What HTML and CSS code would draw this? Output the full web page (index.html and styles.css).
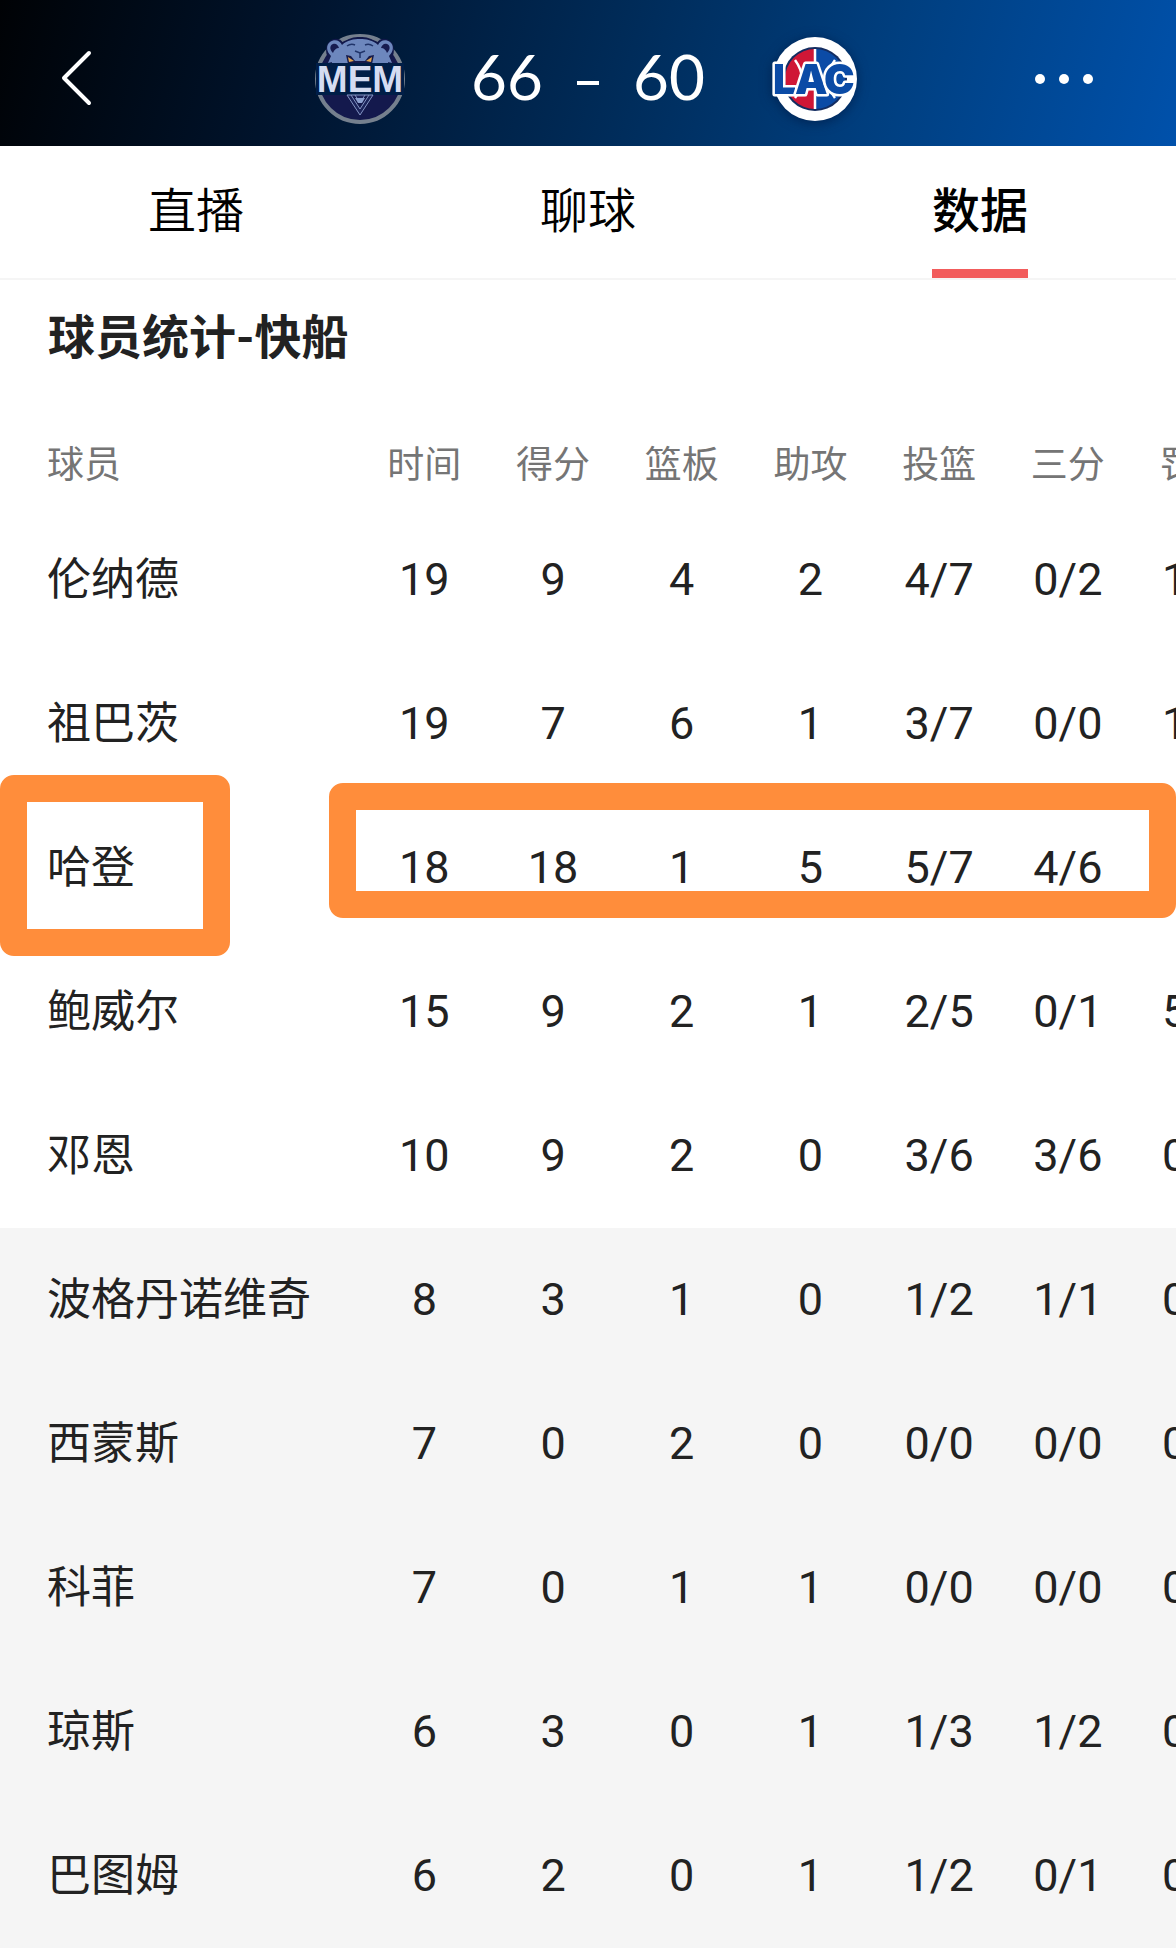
FILE: index.html
```html
<!DOCTYPE html>
<html lang="zh-CN">
<head>
	<meta charset="UTF-8">
	<meta name="viewport" content="width=device-width, initial-scale=1.0">
	<title>球员统计</title>
	<link rel="stylesheet" href="styles.css">
</head>
<body>
	<header class="header">
		<button class="icon-btn" aria-label="返回">
			<svg width="32" height="58" viewBox="0 0 32 58"><path d="M29 3L4 28l25 25" fill="none" stroke="#fff" stroke-width="4" stroke-linecap="round" stroke-linejoin="round"/></svg>
		</button>
		<div class="scoreboard">
			<svg class="logo" viewBox="0 0 90 90">
				<circle cx="45" cy="45" r="43" fill="#14194d" stroke="#75808e" stroke-width="4"/>
				<path d="M15 27C10 21 10 12 14 8c4-5 12-4 14 1C33 4 39 3 45 3s12 1 17 6c2-5 10-6 14-1 4 4 4 13-1 19l2 4-3-1 1 5H15l1-5-3 1z" fill="#11184a"/>
				<path d="M16 22c-5-5-5-11-1-14 4-3 10-2 12 3 5-5 12-6 18-6s13 1 18 6c2-5 8-6 12-3 4 3 4 9-1 14l3 7-4-1 1 5H16l1-5-4 1z" fill="#6d87bd"/>
				<path d="M18 19c-4-4-3-8 0-9 3-1 5 1 6 4-3 0-5 2-6 5zM72 19c4-4 3-8 0-9-3-1-5 1-6 4 3 0 5 2 6 5z" fill="#171c50"/>
				<path d="M32 12q4-3 8-1M50 11q4-2 8 1M40 17l5 2 5-2M45 19v5" fill="none" stroke="#203469" stroke-width="1.5"/>
				<path d="M31 21l5 1 4 5h10l4-5 5-1-2 9H33z" fill="#161b4b"/>
				<path d="M33 23l6 4-5 1zM57 23l-6 4 5 1z" fill="#e2a44d"/>
				<path d="M1 29h88v32H1z" fill="#001e47"/>
				<path d="M32 61h26L45 81zM36 61l9 14 9-14M40 61l5 8 5-8" fill="#1b235a" stroke="#8495c4" stroke-width="1"/>
				<path d="M40 64h10l-3 5h-4z" fill="#8ca0d0"/>
				<text x="45" y="58" class="mem-text">MEM</text>
			</svg>
			<div class="score">
				<span>66</span>
				<span class="dash"></span>
				<span>60</span>
			</div>
			<svg class="logo logo-lac" viewBox="0 0 90 90">
				<circle cx="44" cy="45" r="42" fill="#fff"/>
				<circle cx="44" cy="45" r="32" fill="#142d61"/>
				<path d="M44 15a30 30 0 0 0 0 60z" fill="#cf1736"/>
				<path d="M44 15a30 30 0 0 1 0 60z" fill="#0b4ba6"/>
				<path d="M44 15v60M24 26q14 19 0 38M64 26q-14 19 0 38" fill="none" stroke="#fff" stroke-width="2.5"/>
				<g class="lac-text">
					<text x="2" y="60">L</text>
					<text x="24" y="60">A</text>
					<text x="53" y="60">C</text>
				</g>
			</svg>
		</div>
		<button class="icon-btn" aria-label="更多">
			<svg width="60" height="20" viewBox="0 0 60 20"><g fill="#fff"><circle cx="6" cy="10" r="5"/><circle cx="30" cy="10" r="5"/><circle cx="54" cy="10" r="5"/></g></svg>
		</button>
	</header>
	<nav class="tabs">
		<a href="#live" class="tab">直播</a>
		<a href="#chat" class="tab">聊球</a>
		<a href="#stats" class="tab active">数据</a>
	</nav>
	<main id="stats">
		<h1 class="title">球员统计-快船</h1>
		<div class="table-wrap">
			<table class="stats">
				<thead>
					<tr><th class="name">球员</th><th>时间</th><th>得分</th><th>篮板</th><th>助攻</th><th>投篮</th><th>三分</th><th>罚球</th></tr>
				</thead>
				<tbody>
					<tr><td class="name">伦纳德</td><td>19</td><td>9</td><td>4</td><td>2</td><td>4/7</td><td>0/2</td><td>1/1</td></tr>
					<tr><td class="name">祖巴茨</td><td>19</td><td>7</td><td>6</td><td>1</td><td>3/7</td><td>0/0</td><td>1/2</td></tr>
					<tr class="marked"><td class="name">哈登<span class="mark mark-name"></span><span class="mark mark-data"></span></td><td>18</td><td>18</td><td>1</td><td>5</td><td>5/7</td><td>4/6</td><td>4/4</td></tr>
					<tr><td class="name">鲍威尔</td><td>15</td><td>9</td><td>2</td><td>1</td><td>2/5</td><td>0/1</td><td>5/5</td></tr>
					<tr><td class="name">邓恩</td><td>10</td><td>9</td><td>2</td><td>0</td><td>3/6</td><td>3/6</td><td>0/0</td></tr>
				</tbody>
				<tbody class="bench">
					<tr><td class="name">波格丹诺维奇</td><td>8</td><td>3</td><td>1</td><td>0</td><td>1/2</td><td>1/1</td><td>0/0</td></tr>
					<tr><td class="name">西蒙斯</td><td>7</td><td>0</td><td>2</td><td>0</td><td>0/0</td><td>0/0</td><td>0/0</td></tr>
					<tr><td class="name">科菲</td><td>7</td><td>0</td><td>1</td><td>1</td><td>0/0</td><td>0/0</td><td>0/0</td></tr>
					<tr><td class="name">琼斯</td><td>6</td><td>3</td><td>0</td><td>1</td><td>1/3</td><td>1/2</td><td>0/0</td></tr>
					<tr><td class="name">巴图姆</td><td>6</td><td>2</td><td>0</td><td>1</td><td>1/2</td><td>0/1</td><td>0/0</td></tr>
				</tbody>
			</table>
		</div>
	</main>
</body>
</html>
```

FILE: styles.css
```css
* {
	box-sizing: border-box;
}

body {
	margin: 0;
	background: #fff;
	color: #222;
	font-family: Roboto, "Noto Sans CJK SC", sans-serif;
}

.header {
	height: 146px;
	padding-top: 12px;
	display: grid;
	grid-template-columns: 1fr auto 1fr;
	align-items: center;
	background: linear-gradient(105deg, #000205 0%, #001530 27%, #002b58 52%, #003f80 75%, #0051ab 100%);
}

.icon-btn {
	display: flex;
	margin: 0 82px 0 60px;
	padding: 0;
	border: none;
	background: none;
	cursor: pointer;
	justify-self: start;
}

.icon-btn:last-child {
	justify-self: end;
}

.scoreboard {
	display: flex;
	align-items: center;
	gap: 66px;
}

.logo {
	width: 90px;
	height: 90px;
	overflow: visible;
}

.logo-lac {
	filter: drop-shadow(0 2px 6px rgba(0, 20, 60, 0.6));
}

.mem-text {
	font: bold 37px "Liberation Sans", sans-serif;
	text-anchor: middle;
	fill: #d5dcf1;
}

.lac-text {
	font: 900 41px Inter, sans-serif;
	fill: #0b4ba6;
	stroke: #fff;
	stroke-width: 5px;
	stroke-linejoin: round;
	paint-order: stroke;
}

.score {
	display: flex;
	align-items: center;
	gap: 34px;
	padding-bottom: 6px;
	color: #fff;
	font-family: Lato, sans-serif;
	font-size: 62px;
	line-height: 72px;
}

.dash {
	width: 22px;
	height: 4px;
	margin-top: 14px;
	background: #fff;
}

.tabs {
	display: grid;
	grid-template-columns: repeat(3, 1fr);
	justify-items: center;
	height: 134px;
	border-bottom: 2px solid #f5f5f5;
}

.tab {
	height: 132px;
	padding-top: 30px;
	color: #000;
	font-size: 48px;
	font-weight: 350;
	line-height: 72px;
	text-decoration: none;
}

.tab.active {
	font-weight: 500;
	border-bottom: 9px solid #f25c5c;
}

.title {
	margin: 0;
	padding: 22px 48px 0;
	font-size: 47px;
	line-height: 72px;
}

.table-wrap {
	overflow: hidden;
}

.stats {
	width: 1261px;
	margin-top: 46px;
	table-layout: fixed;
	border-collapse: collapse;
	text-align: center;
}

.stats th {
	height: 88px;
	padding: 0 0 4px;
	color: #757575;
	font-size: 37px;
	font-weight: 400;
}

.stats td {
	height: 144px;
	padding: 0 0 2px;
	font-size: 45px;
}

.stats .name {
	width: 360px;
	padding-left: 47px;
	text-align: left;
}

.stats td.name {
	padding-bottom: 8px;
	font-size: 44px;
}

.bench {
	background: #f5f5f5;
}

.marked {
	position: relative;
}

/* orange frames over the highlighted player */
.mark {
	position: absolute;
	border: 27px solid #ff8d3b;
	border-radius: 14px;
}

.mark-name {
	top: -21px;
	bottom: -16px;
	left: 0;
	width: 230px;
}

.mark-data {
	top: -13px;
	bottom: 22px;
	left: 329px;
	right: 85px;
}
```
